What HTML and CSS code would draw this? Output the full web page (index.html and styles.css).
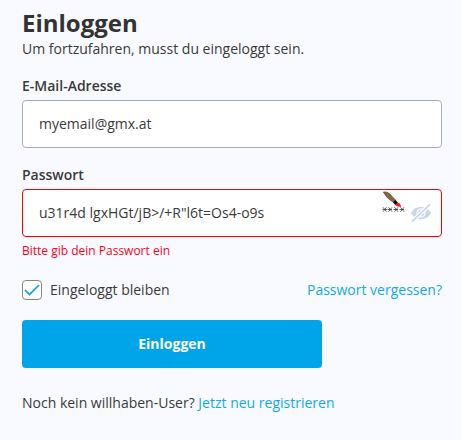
FILE: index.html
```html
<!DOCTYPE html>
<html lang="de">
<head>
<meta charset="utf-8">
<title>Einloggen</title>
<link rel="stylesheet" href="styles.css">
</head>
<body>
<main class="login">
  <h1 class="title">Einloggen</h1>
  <p class="subtitle">Um fortzufahren, musst du eingeloggt sein.</p>
  <form class="form">
    <label class="label">E-Mail-Adresse</label>
    <div class="field field-email">myemail@gmx.at</div>
    <label class="label">Passwort</label>
    <div class="field field-error">
      <span>u31r4d lgxHGt/jB&gt;/+R"l6t=Os4-o9s</span>
      <svg class="brush" width="24" height="26" viewBox="0 0 24 26">
        <path d="M1.300 2Q5 1.200 8 4L14 10.500L11.500 12.500Q4 8 1.300 2Z" fill="#85683f" stroke="#574932" stroke-width=".5"/>
        <path d="M13.300 10L16 12.500L13.500 15L11 12.500Z" fill="#080808"/>
        <path d="M15.500 12.500Q18.500 13 19.200 16.800Q16 17 13.300 15.300Z" fill="#f81820"/>
        <path d="M.5 19.500h4.500M5.500 19.500h4.500M11.500 19.500h4.500M17.500 19.500h4.500" stroke="#555" stroke-width=".9"/>
        <path d="M1 17.300l3.500 4.400M4.500 17.300l-3.500 4.400M6.500 17.300l3.500 4.400M10 17.300l-3.500 4.400M12.500 17.300l3.500 4.400M16 17.300l-3.500 4.400M18.500 17.300l3.500 4.400M22 17.300l-3.500 4.400" stroke="#333" stroke-width=".75"/>
      </svg>
      <svg class="eye" width="20" height="18" viewBox="0 0 20 18">
        <path d="M0 9C5 .7 15 .7 20 9C15 17.300 5 17.300 0 9Z" fill="#cbd6e5"/>
        <circle cx="10" cy="9" r="4" fill="none" stroke="#fff" stroke-width="1.200"/>
        <path d="M1 17.700L19 .3" stroke="#fff" stroke-width="4"/>
        <path d="M1 17.700L19 .3" stroke="#cbd6e5" stroke-width="1.600"/>
      </svg>
    </div>
    <p class="error">Bitte gib dein Passwort ein</p>
    <div class="options">
      <span class="check"><svg width="16" height="14" viewBox="0 0 16 14"><path d="M1 7L5.500 11.500L15 2" fill="none" stroke="#00a4e8" stroke-width="1.600"/></svg></span>
      <span>Eingeloggt bleiben</span>
      <a class="link forgot">Passwort vergessen?</a>
    </div>
    <button class="button" type="button">Einloggen</button>
  </form>
  <p class="register">Noch kein willhaben-User? <a class="link">Jetzt neu registrieren</a></p>
</main>
</body>
</html>
```
FILE: styles.css
```css
* { box-sizing: border-box; }
body { margin: 0; background: #f9faff; color: #3a3a3a; font: 14px/20px "Open Sans", sans-serif; }
.login { padding: 7px 19px 0 22px; }
.title { margin: 0; font-size: 24px; line-height: 32px; font-weight: 700; color: #333; }
.subtitle { margin: 0 0 17px; }
.label { display: block; font-weight: 600; height: 24px; }
.field { display: flex; align-items: center; height: 48px; padding: 0 10px 0 16px; background: #fff; border: 1px solid #a5aec3; border-radius: 4px; }
.field-email { margin-bottom: 17px; }
.field-error { border-color: #fa0000; }
.brush { margin: -20px 5px 0 auto; }
.error { margin: 4px 0 19px; font-size: 12px; color: #ff0019; }
.options { display: flex; align-items: center; margin-bottom: 20px; }
.check { display: flex; align-items: center; justify-content: center; width: 20px; height: 20px; margin-right: 8px; border: 1px solid #888; border-radius: 4px; background: #fff; }
.link { color: #12a9e9; }
.forgot { margin-left: auto; }
.button { display: block; width: 300px; height: 48px; padding: 0; border: 0; border-radius: 4px; background: #00a4e8; color: #fff; font: 700 14px/20px "Open Sans", sans-serif; }
.register { margin: 25px 0 0; }
```
